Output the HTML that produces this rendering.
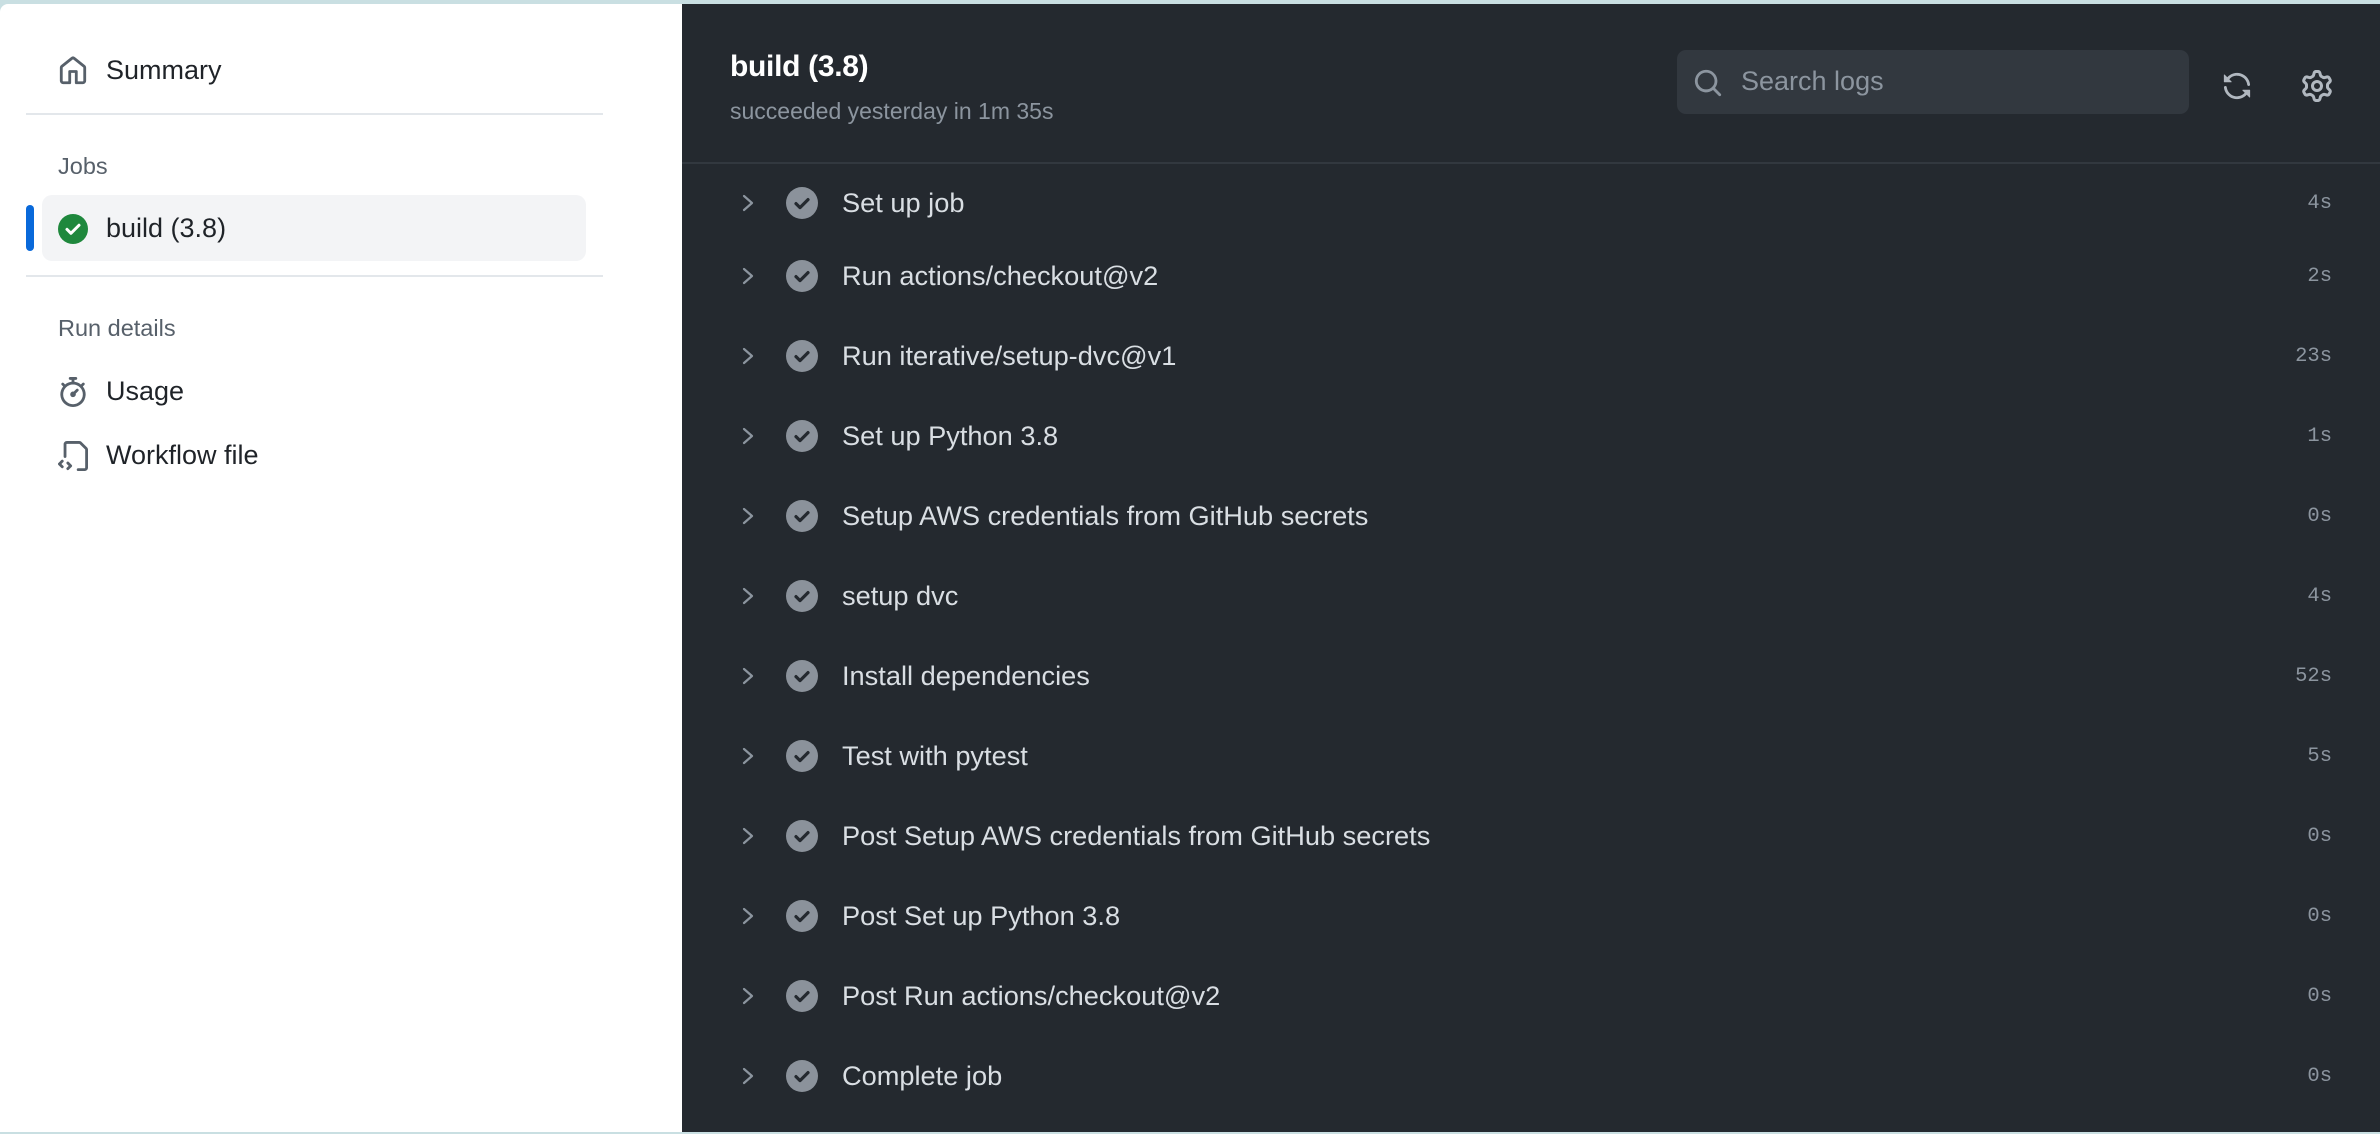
<!DOCTYPE html>
<html><head><meta charset="utf-8"><style>
*{margin:0;padding:0;box-sizing:border-box}
html,body{width:2380px;height:1134px;overflow:hidden;background:#c9dfe2;font-family:"Liberation Sans",sans-serif}
#side{position:absolute;left:0;top:4px;width:682px;height:1128px;background:#fff;border-top-left-radius:8px}
#main{position:absolute;left:682px;top:4px;width:1698px;height:1128px;background:#24292f}
.si{position:absolute;left:58px;display:flex;align-items:center;font-size:27px;color:#1f2328}
.si svg{width:30px;height:30px;margin-right:18px}
.lbl{position:absolute;left:58px;font-size:23.5px;color:#57606a}
.hr{position:absolute;left:26px;width:577px;height:2px;background:#e3e7eb}
.step{position:absolute;left:0;width:1698px;height:40px;display:flex;align-items:center}
.step .ch{position:absolute;left:58px}
.step .ck{position:absolute;left:104px}
.step .t{position:absolute;left:160px;font-size:27.2px;color:#d9dee3}
.step .d{position:absolute;right:48px;font-family:"Liberation Mono",monospace;font-size:20.5px;color:#8c959f}
</style></head><body>
<div id="side">
 <div class="si" style="top:51px"><svg viewBox="0 0 16 16" fill="#57606a"><path d="M6.906.664a1.749 1.749 0 0 1 2.187 0l5.25 4.2c.415.332.657.835.657 1.367v7.019A1.75 1.75 0 0 1 13.250 15h-3.5a.75.75 0 0 1-.75-.75V9H7v5.25a.75.75 0 0 1-.75.75h-3.5A1.75 1.75 0 0 1 1 13.25V6.23c0-.531.242-1.034.657-1.366l5.25-4.2Zm1.25 1.171a.25.25 0 0 0-.312 0l-5.250 4.2a.25.25 0 0 0-.094.196v7.019c0 .138.112.25.25.25H5.5V8.25a.75.75 0 0 1 .75-.75h3.5a.75.75 0 0 1 .75.75v5.25h2.75a.25.25 0 0 0 .25-.25V6.23a.25.25 0 0 0-.094-.195Z"/></svg>Summary</div>
 <div class="hr" style="top:109px"></div>
 <div class="lbl" style="top:149px">Jobs</div>
 <div style="position:absolute;left:26px;top:201px;width:8px;height:46px;border-radius:4px;background:#0969da"></div>
 <div style="position:absolute;left:42px;top:191px;width:544px;height:66px;border-radius:10px;background:#f3f4f6"></div>
 <div class="si" style="top:209px"><svg viewBox="0 0 16 16"><circle cx="8" cy="8" r="8" fill="#1f883d"/><path d="M4.8 8.2l2.1 2.1 4.3-4.3" stroke="#fff" stroke-width="1.6" fill="none" stroke-linecap="round" stroke-linejoin="round"/></svg>build (3.8)</div>
 <div class="hr" style="top:271px"></div>
 <div class="lbl" style="top:311px">Run details</div>
 <div class="si" style="top:372px"><svg viewBox="0 0 16 16" fill="#57606a"><path d="M5.75.75A.75.75 0 0 1 6.5 0h3a.75.75 0 0 1 0 1.5h-.75v1l-.001.041a6.724 6.724 0 0 1 3.464 1.435l.007-.006.75-.75a.749.749 0 0 1 1.275.326.749.749 0 0 1-.215.734l-.75.75-.006.007a6.75 6.75 0 1 1-10.548 0L2.72 5.03l-.75-.75a.751.751 0 0 1 .018-1.042.751.751 0 0 1 1.042-.018l.75.75.007.006A6.72 6.72 0 0 1 7.25 2.541V1.5H6.5a.75.75 0 0 1-.75-.75ZM8 14.5A5.25 5.25 0 1 0 8 4a5.25 5.25 0 0 0 0 10.5Zm.389-6.7 1.33-1.33a.75.75 0 1 1 1.061 1.06L9.45 8.861A1.503 1.503 0 0 1 8 10.75a1.499 1.499 0 1 1 .389-2.95Z"/></svg>Usage</div>
 <div class="si" style="top:436px"><svg viewBox="0 0 16 16" fill="#57606a"><path d="M2 1.75C2 .784 2.784 0 3.75 0h6.586c.464 0 .909.184 1.237.513l2.914 2.914c.329.328.513.773.513 1.237v9.586A1.75 1.75 0 0 1 13.25 16h-3.5a.75.75 0 0 1 0-1.5h3.5a.25.25 0 0 0 .25-.25V4.664a.25.25 0 0 0-.073-.177l-2.914-2.914a.25.25 0 0 0-.177-.073H3.75a.25.25 0 0 0-.25.25v6.5a.75.75 0 0 1-1.5 0v-6.5Zm1.72 9.47a.75.75 0 0 1 1.06 0l1.5 1.5a.75.75 0 0 1 0 1.06l-1.5 1.5a.75.75 0 1 1-1.06-1.06l.97-.97-.97-.97a.75.75 0 0 1 0-1.06ZM1.78 11.28l-.97.97.97.97a.75.75 0 1 1-1.06 1.060l-1.5-1.5a.75.75 0 0 1 0-1.06l1.5-1.5a.75.75 0 1 1 1.06 1.06Z" transform="translate(1 0)"/></svg>Workflow file</div>
</div>
<div id="main">
 <div style="position:absolute;left:48px;top:46px;font-size:30px;font-weight:bold;color:#fff;letter-spacing:-0.3px">build (3.8)</div>
 <div style="position:absolute;left:48px;top:94px;font-size:23px;color:#8c959f">succeeded yesterday in 1m 35s</div>
 <div style="position:absolute;left:995px;top:46px;width:512px;height:64px;border-radius:9px;background:#32383f">
  <svg style="position:absolute;left:16px;top:18px" width="30" height="30" viewBox="0 0 16 16" fill="#8c959f"><path d="M10.68 11.74a6 6 0 0 1-7.922-8.982 6 6 0 0 1 8.982 7.922l3.04 3.04a.749.749 0 0 1-.326 1.275.749.749 0 0 1-.734-.215ZM11.5 7a4.499 4.499 0 1 0-8.997 0A4.499 4.499 0 0 0 11.5 7Z"/></svg>
  <div style="position:absolute;left:64px;top:16px;font-size:27px;color:#8c959f">Search logs</div>
 </div>
 <svg style="position:absolute;left:1540px;top:67px" width="30" height="30" viewBox="0 0 16 16" fill="#b1b8c0"><path d="M1.705 8.005a.75.75 0 0 1 .834.656 5.5 5.5 0 0 0 9.592 2.97l-1.204-1.204a.25.25 0 0 1 .177-.427h3.646a.25.25 0 0 1 .25.25v3.646a.25.25 0 0 1-.427.177l-1.38-1.38A7.002 7.002 0 0 1 1.05 8.84a.75.75 0 0 1 .656-.834ZM8 2.5a5.487 5.487 0 0 0-4.131 1.869l1.204 1.204A.25.25 0 0 1 4.896 6H1.25A.25.25 0 0 1 1 5.75V2.104a.25.25 0 0 1 .427-.177l1.38 1.38A7.002 7.002 0 0 1 14.95 7.16a.75.75 0 0 1-1.49.178A5.5 5.5 0 0 0 8 2.5Z"/></svg>
 <svg style="position:absolute;left:1619px;top:66px" width="32" height="32" viewBox="0 0 16 16" fill="#b1b8c0"><path d="M8 0a8.2 8.2 0 0 1 .701.031C9.444.095 9.99.645 10.16 1.29l.288 1.107c.018.066.079.158.212.224.231.114.454.243.668.386.123.082.233.09.299.071l1.103-.303c.644-.176 1.392.021 1.82.63.27.385.506.792.704 1.218.315.675.111 1.422-.364 1.891l-.814.806c-.049.048-.098.147-.088.294.016.257.016.515 0 .772-.01.147.038.246.088.294l.814.806c.475.469.679 1.216.364 1.891a7.977 7.977 0 0 1-.704 1.217c-.428.61-1.176.807-1.82.63l-1.102-.302c-.067-.019-.177-.011-.3.071a5.909 5.909 0 0 1-.668.386c-.133.066-.194.158-.211.224l-.29 1.106c-.168.646-.715 1.196-1.458 1.26a8.006 8.006 0 0 1-1.402 0c-.743-.064-1.289-.614-1.458-1.26l-.289-1.106c-.018-.066-.079-.158-.212-.224a5.738 5.738 0 0 1-.668-.386c-.123-.082-.233-.09-.299-.071l-1.103.303c-.644.176-1.392-.021-1.82-.63a8.12 8.12 0 0 1-.704-1.218c-.315-.675-.111-1.422.363-1.891l.815-.806c.05-.048.098-.147.088-.294a6.214 6.214 0 0 1 0-.772c.01-.147-.038-.246-.088-.294l-.815-.806C.635 6.045.431 5.298.746 4.623a7.92 7.920 0 0 1 .704-1.217c.428-.61 1.176-.807 1.82-.63l1.102.302c.067.019.177.011.3-.071.214-.143.437-.272.668-.386.133-.066.194-.158.211-.224l.29-1.106C6.009.645 6.556.095 7.299.03 7.53.01 7.764 0 8 0Zm-.571 1.525c-.036.003-.108.036-.137.146l-.289 1.105c-.147.561-.549.967-.998 1.189-.173.086-.34.183-.5.29-.417.278-.97.423-1.529.27l-1.103-.303c-.109-.03-.175.016-.195.045-.22.312-.412.644-.573.99-.014.031-.021.11.059.19l.815.806c.411.406.562.957.53 1.456a4.709 4.709 0 0 0 0 .582c.032.499-.119 1.05-.53 1.456l-.815.806c-.081.08-.073.159-.059.19.162.346.353.677.573.989.02.03.085.076.195.046l1.102-.303c.56-.153 1.113-.008 1.53.27.161.107.328.204.501.29.447.222.85.629.997 1.189l.289 1.105c.029.109.101.143.137.146a6.6 6.6 0 0 0 1.142 0c.036-.003.108-.036.137-.146l.289-1.105c.147-.561.549-.967.998-1.189.173-.086.34-.183.5-.29.417-.278.97-.423 1.529-.27l1.103.303c.109.029.175-.016.195-.045.22-.313.411-.644.573-.99.014-.031.021-.11-.059-.19l-.815-.806c-.411-.406-.562-.957-.53-1.456a4.709 4.709 0 0 0 0-.582c-.032-.499.119-1.05.53-1.456l.815-.806c.081-.08.073-.159.059-.19a6.464 6.464 0 0 0-.573-.989c-.02-.03-.085-.076-.195-.046l-1.102.303c-.56.153-1.113.008-1.53-.27a4.44 4.44 0 0 0-.501-.29c-.447-.222-.85-.629-.997-1.189l-.289-1.105c-.029-.11-.101-.143-.137-.146a6.6 6.6 0 0 0-1.142 0ZM11 8a3 3 0 1 1-6 0 3 3 0 0 1 6 0ZM9.5 8a1.5 1.5 0 1 0-3.001.001A1.5 1.5 0 0 0 9.5 8Z"/></svg>
 <div style="position:absolute;left:0;top:158px;width:1698px;height:2px;background:#32383f"></div>
 <div id="steps"></div>
</div>
<script>
var s=[["Set up job","4s"],["Run actions/checkout@v2","2s"],["Run iterative/setup-dvc@v1","23s"],["Set up Python 3.8","1s"],["Setup AWS credentials from GitHub secrets","0s"],["setup dvc","4s"],["Install dependencies","52s"],["Test with pytest","5s"],["Post Setup AWS credentials from GitHub secrets","0s"],["Post Set up Python 3.8","0s"],["Post Run actions/checkout@v2","0s"],["Complete job","0s"]];
var h="";
s.forEach(function(r,i){var y=(i==0?203:276+80*(i-1))-4-20;
h+='<div class="step" style="top:'+y+'px"><svg class="ch" width="16" height="24" viewBox="0 0 16 24"><path d="M4 5l8 7-8 7" stroke="#8c959f" stroke-width="2.2" fill="none" stroke-linecap="round" stroke-linejoin="round"/></svg><svg class="ck" width="32" height="32" viewBox="0 0 16 16"><circle cx="8" cy="8" r="8" fill="#8b929b"/><path d="M5 8.3l2 2 4-4" stroke="#24292f" stroke-width="1.6" fill="none" stroke-linecap="round" stroke-linejoin="round"/></svg><span class="t">'+r[0]+'</span><span class="d">'+r[1]+'</span></div>';});
document.getElementById("steps").innerHTML=h;
</script>
</body></html>
